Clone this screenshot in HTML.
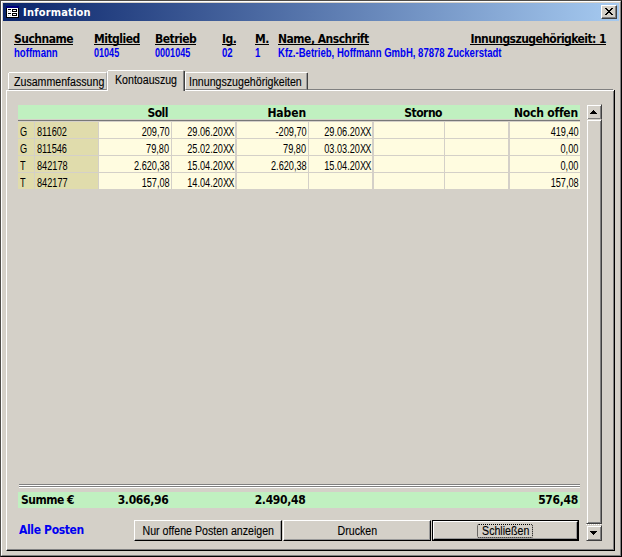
<!DOCTYPE html>
<html lang="de"><head><meta charset="utf-8"><title>Information</title>
<style>
html,body{margin:0;padding:0;}
body{width:622px;height:557px;overflow:hidden;background:#d4d0c8;position:relative;font-family:"Liberation Sans",sans-serif;font-size:12px;color:#000;}
.a{position:absolute;}
.t{position:absolute;white-space:nowrap;line-height:14px;height:14px;}
.lbl{font-family:"DejaVu Sans Condensed","Liberation Sans",sans-serif;font-weight:bold;font-size:12px;letter-spacing:-0.5px;}
.u{border-bottom:1px solid #000;height:10px;line-height:11px;}
.val{font-weight:bold;font-size:12px;color:#0000f0;transform-origin:0 0;transform:scaleX(.8);}
.cell{position:absolute;height:16px;background:#fffce0;}
.k{background:#e0dcac;}
.n{position:absolute;top:3px;white-space:nowrap;line-height:14px;font-size:12px;transform:scaleX(.765);}
.r{right:1.5px;transform-origin:100% 0;}
.l{left:2px;transform-origin:0 0;}
.xx{letter-spacing:-1.1px;}
.dt{right:1px !important;}
.btn{position:absolute;box-sizing:border-box;background:#d4d0c8;border:1px solid;border-color:#fff #000 #000 #fff;box-shadow:inset -1px -1px 0 #999;}
.btxt{position:absolute;left:0;right:0;text-align:center;white-space:nowrap;line-height:14px;font-size:12px;}
.ttxt,.btxt{-webkit-text-stroke:.12px #000;}
.ttxt{position:absolute;white-space:nowrap;line-height:14px;font-size:12px;}
.ttxt span{display:inline-block;transform-origin:0 0;transform:scaleX(.885);}
.btxt span{display:inline-block;transform:scaleX(.885);}
</style></head><body>
<!-- window frame -->
<div class="a" style="left:0;top:0;width:622px;height:557px;box-sizing:border-box;border:1px solid;border-color:#4e4c48 #000 #000 #4e4c48;"></div>
<div class="a" style="left:1px;top:1px;width:620px;height:555px;box-sizing:border-box;border:1px solid;border-color:#fff #808080 #808080 #fff;"></div>
<!-- title bar -->
<div class="a" style="left:3px;top:3px;width:616px;height:18px;background:linear-gradient(90deg,#0a246a 0%,#a6caf0 100%);"></div>
<svg class="a" style="left:6px;top:6px" width="13" height="12" viewBox="0 0 13 12" shape-rendering="crispEdges">
<rect x="0" y="0" width="13" height="2" fill="#000080"/>
<rect x="0" y="2" width="13" height="10" fill="#000"/>
<defs><pattern id="dz" x="0" y="0" width="2" height="2" patternUnits="userSpaceOnUse"><rect width="2" height="2" fill="#fff"/><rect x="0" y="1" width="1" height="1" fill="#bdbdbd"/></pattern></defs><rect x="1" y="2" width="11" height="9" fill="url(#dz)"/>
<rect x="2" y="3" width="3" height="1" fill="#000"/><rect x="2" y="7" width="3" height="1" fill="#000"/>
<rect x="6" y="3" width="5" height="3" fill="#000"/><rect x="7" y="4" width="3" height="1" fill="#fff"/>
<rect x="6" y="7" width="5" height="3" fill="#000"/><rect x="7" y="8" width="3" height="1" fill="#fff"/>
</svg>
<div class="t" style="left:23px;top:6px;color:#fff;font:bold 11px/14px 'DejaVu Sans Condensed','Liberation Sans',sans-serif;letter-spacing:.2px;">Information</div>
<!-- close button -->
<div class="btn" style="left:601px;top:5px;width:16px;height:14px;border-color:#fff #404040 #404040 #fff;box-shadow:inset -1px -1px 0 #808080;"></div>
<svg class="a" style="left:605px;top:8px" width="8" height="7" viewBox="0 0 8 7" shape-rendering="crispEdges"><path d="M0 0h2v1h-2zM6 0h2v1h-2zM1 1h2v1h-2zM5 1h2v1h-2zM2 2h4v1h-4zM3 3h2v1h-2zM2 4h4v1h-4zM1 5h2v1h-2zM5 5h2v1h-2zM0 6h2v1h-2zM6 6h2v1h-2z" fill="#000"/></svg>

<!-- header labels -->
<div class="t lbl u" style="left:14px;top:34px;">Suchname</div>
<div class="t lbl u" style="left:94px;top:34px;">Mitglied</div>
<div class="t lbl u" style="left:155px;top:34px;">Betrieb</div>
<div class="t lbl u" style="left:222px;top:34px;">Ig.</div>
<div class="t lbl u" style="left:255px;top:34px;">M.</div>
<div class="t lbl u" style="left:278px;top:34px;">Name, Anschrift</div>
<div class="t lbl u" style="right:16px;top:34px;letter-spacing:-.56px;">Innungszugehörigkeit: 1</div>
<div class="t val" style="left:14px;top:46px;">hoffmann</div>
<div class="t val" style="left:94px;top:46px;transform:scaleX(.755);">01045</div>
<div class="t val" style="left:155px;top:46px;transform:scaleX(.755);">0001045</div>
<div class="t val" style="left:222px;top:46px;">02</div>
<div class="t val" style="left:255px;top:46px;">1</div>
<div class="t val" style="left:278px;top:46px;transform:scaleX(.796);">Kfz.-Betrieb, Hoffmann GmbH, 87878 Zuckerstadt</div>

<!-- tab pane -->
<div class="a" style="left:6px;top:90px;width:609px;height:461px;box-sizing:border-box;border:1px solid;border-color:#fff #000 #000 #fff;box-shadow:inset -1px -1px 0 #808080;"></div>
<div class="a" style="left:614px;top:90px;width:1px;height:1px;background:#000;"></div>
<!-- tabs -->
<div class="a" style="left:308px;top:89px;width:305px;height:1px;background:#808080;"></div>
<div class="a" style="left:8px;top:72px;width:99px;height:18px;box-sizing:border-box;border:1px solid;border-color:#fff #a8a8a8 #808080 #fff;"></div>
<div class="a" style="left:8px;top:72px;width:1px;height:1px;background:#d4d0c8;"></div>
<div class="ttxt" style="left:14px;top:75px;"><span>Zusammenfassung</span></div>
<div class="a" style="left:185px;top:72px;width:123px;height:18px;box-sizing:border-box;border:1px solid;border-color:#fff #404040 #808080 #fff;box-shadow:inset -1px 0 0 #9a9a9a;"></div>
<div class="a" style="left:307px;top:72px;width:1px;height:1px;background:#d4d0c8;"></div>
<div class="ttxt" style="left:189px;top:75px;"><span>Innungszugehörigkeiten</span></div>
<div class="a" style="left:107px;top:70px;width:78px;height:21px;background:#d4d0c8;box-sizing:border-box;border:1px solid;border-color:#fff #404040 #d4d0c8 #fff;border-bottom:0;box-shadow:inset -1px 0 0 #808080;"></div>
<div class="a" style="left:107px;top:70px;width:1px;height:1px;background:#d4d0c8;"></div>
<div class="a" style="left:183px;top:70px;width:2px;height:1px;background:#d4d0c8;"></div>
<div class="ttxt" style="left:115px;top:73px;"><span>Kontoauszug</span></div>

<!-- table header -->
<div class="a" style="left:18px;top:105px;width:562px;height:14px;background:#c0f0c0;"></div>
<div class="a" style="left:18px;top:120px;width:562px;height:1px;background:#787878;"></div>
<div class="t lbl" style="right:454px;top:106px;">Soll</div>
<div class="t lbl" style="right:316px;top:106px;letter-spacing:-.1px;">Haben</div>
<div class="t lbl" style="right:180px;top:106px;">Storno</div>
<div class="t lbl" style="right:44px;top:106px;letter-spacing:-.2px;">Noch offen</div>
<!-- rows -->
<div class="cell k" style="left:18px;top:122px;width:16px;"><span class="n l">G</span></div>
<div class="cell k" style="left:35px;top:122px;width:63px;"><span class="n l">811602</span></div>
<div class="cell" style="left:99px;top:122px;width:72px;"><span class="n r">209,70</span></div>
<div class="cell" style="left:172px;top:122px;width:63px;"><span class="n r dt">29.06.20<span class="xx">XX</span></span></div>
<div class="cell" style="left:237px;top:122px;width:71px;"><span class="n r">-209,70</span></div>
<div class="cell" style="left:309px;top:122px;width:63px;"><span class="n r dt">29.06.20<span class="xx">XX</span></span></div>
<div class="cell" style="left:374px;top:122px;width:70px;"></div>
<div class="cell" style="left:445px;top:122px;width:63px;"></div>
<div class="cell" style="left:510px;top:122px;width:70px;"><span class="n r">419,40</span></div>
<div class="cell k" style="left:18px;top:139px;width:16px;"><span class="n l">G</span></div>
<div class="cell k" style="left:35px;top:139px;width:63px;"><span class="n l">811546</span></div>
<div class="cell" style="left:99px;top:139px;width:72px;"><span class="n r">79,80</span></div>
<div class="cell" style="left:172px;top:139px;width:63px;"><span class="n r dt">25.02.20<span class="xx">XX</span></span></div>
<div class="cell" style="left:237px;top:139px;width:71px;"><span class="n r">79,80</span></div>
<div class="cell" style="left:309px;top:139px;width:63px;"><span class="n r dt">03.03.20<span class="xx">XX</span></span></div>
<div class="cell" style="left:374px;top:139px;width:70px;"></div>
<div class="cell" style="left:445px;top:139px;width:63px;"></div>
<div class="cell" style="left:510px;top:139px;width:70px;"><span class="n r">0,00</span></div>
<div class="cell k" style="left:18px;top:156px;width:16px;"><span class="n l">T</span></div>
<div class="cell k" style="left:35px;top:156px;width:63px;"><span class="n l">842178</span></div>
<div class="cell" style="left:99px;top:156px;width:72px;"><span class="n r">2.620,38</span></div>
<div class="cell" style="left:172px;top:156px;width:63px;"><span class="n r dt">15.04.20<span class="xx">XX</span></span></div>
<div class="cell" style="left:237px;top:156px;width:71px;"><span class="n r">2.620,38</span></div>
<div class="cell" style="left:309px;top:156px;width:63px;"><span class="n r dt">15.04.20<span class="xx">XX</span></span></div>
<div class="cell" style="left:374px;top:156px;width:70px;"></div>
<div class="cell" style="left:445px;top:156px;width:63px;"></div>
<div class="cell" style="left:510px;top:156px;width:70px;"><span class="n r">0,00</span></div>
<div class="cell k" style="left:18px;top:173px;width:16px;"><span class="n l">T</span></div>
<div class="cell k" style="left:35px;top:173px;width:63px;"><span class="n l">842177</span></div>
<div class="cell" style="left:99px;top:173px;width:72px;"><span class="n r">157,08</span></div>
<div class="cell" style="left:172px;top:173px;width:63px;"><span class="n r dt">14.04.20<span class="xx">XX</span></span></div>
<div class="cell" style="left:237px;top:173px;width:71px;"></div>
<div class="cell" style="left:309px;top:173px;width:63px;"></div>
<div class="cell" style="left:374px;top:173px;width:70px;"></div>
<div class="cell" style="left:445px;top:173px;width:63px;"></div>
<div class="cell" style="left:510px;top:173px;width:70px;"><span class="n r">157,08</span></div>
<!-- sum -->
<div class="a" style="left:19px;top:484px;width:561px;height:1px;background:#808080;"></div>
<div class="a" style="left:19px;top:485px;width:561px;height:1px;background:#fff;"></div>
<div class="a" style="left:19px;top:486px;width:561px;height:1px;background:#808080;"></div>
<div class="a" style="left:19px;top:487px;width:561px;height:1px;background:#fff;"></div>
<div class="a" style="left:18px;top:492px;width:562px;height:16px;background:#c0f0c0;"></div>
<div class="t lbl" style="left:21px;top:493px;">Summe €</div>
<div class="t lbl" style="right:453.5px;top:493px;letter-spacing:-.3px;">3.066,96</div>
<div class="t lbl" style="right:316.5px;top:493px;letter-spacing:-.3px;">2.490,48</div>
<div class="t lbl" style="right:44px;top:493px;letter-spacing:-.3px;">576,48</div>
<div class="t lbl" style="left:19px;top:523px;color:#0000f0;letter-spacing:-.35px;">Alle Posten</div>
<!-- buttons -->
<div class="btn" style="left:134px;top:520px;width:148px;height:21px;"></div>
<div class="btxt" style="left:134px;width:148px;top:524px;right:auto;"><span>Nur offene Posten anzeigen</span></div>
<div class="btn" style="left:283px;top:520px;width:148px;height:21px;"></div>
<div class="btxt" style="left:283px;width:148px;top:524px;right:auto;"><span>Drucken</span></div>
<div class="a" style="left:432px;top:520px;width:147px;height:21px;background:#000;"></div>
<div class="btn" style="left:433px;top:521px;width:145px;height:19px;"></div>
<div class="btxt" style="left:432px;width:147px;top:524px;right:auto;"><span>Schließen</span></div>
<div class="a" style="left:477px;top:524px;width:56px;height:14px;box-sizing:border-box;border:1px dotted #000;border-radius:2px;"></div>
<!-- scrollbar -->
<div class="btn" style="left:586px;top:104px;width:16px;height:16px;border-color:#d4d0c8 #404040 #404040 #d4d0c8;box-shadow:inset 1px 1px 0 #fff,inset -1px -1px 0 #808080;"></div>
<svg class="a" style="left:590px;top:110px" width="7" height="4" viewBox="0 0 7 4" shape-rendering="crispEdges"><path d="M3 0h1v1h-1zM2 1h3v1h-3zM1 2h5v1h-5zM0 3h7v1h-7z"/></svg>
<div class="btn" style="left:586px;top:119px;width:16px;height:405px;border-color:#d4d0c8 #404040 #404040 #d4d0c8;box-shadow:inset 1px 1px 0 #fff,inset -1px -1px 0 #808080;"></div>
<div class="a" style="left:586px;top:524px;width:16px;height:1px;background:repeating-linear-gradient(90deg,#fff 0 1px,#d4d0c8 1px 2px);"></div>
<div class="btn" style="left:586px;top:525px;width:16px;height:16px;border-color:#d4d0c8 #404040 #404040 #d4d0c8;box-shadow:inset 1px 1px 0 #fff,inset -1px -1px 0 #808080;"></div>
<svg class="a" style="left:590px;top:531px" width="7" height="4" viewBox="0 0 7 4" shape-rendering="crispEdges"><path d="M0 0h7v1h-7zM1 1h5v1h-5zM2 2h3v1h-3zM3 3h1v1h-1z"/></svg>
</body></html>
